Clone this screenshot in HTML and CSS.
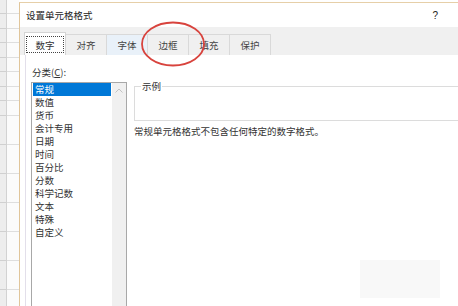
FILE: index.html
```html
<!DOCTYPE html>
<html lang="zh-CN">
<head>
    <meta charset="UTF-8">
    <title>设置单元格格式</title>
    <link rel="stylesheet" href="styles.css">
</head>
<body>

    <div class="sheet">
        <div class="row-head"></div>
        <div class="cells"></div>
    </div>

    <div class="dialog">
        <div class="titlebar">
            <span class="title">设置单元格格式</span>
            <span class="help">?</span>
        </div>

        <div class="tabs">
            <div class="tab active"><span class="focus">数字</span></div>
            <div class="tab">对齐</div>
            <div class="tab hover">字体</div>
            <div class="tab">边框</div>
            <div class="tab">填充</div>
            <div class="tab">保护</div>
        </div>

        <div class="page">
            <div class="category">
                <div class="label">分类(<u>C</u>):</div>
                <div class="listbox">
                    <ul class="items">
                        <li class="selected">常规</li>
                        <li>数值</li>
                        <li>货币</li>
                        <li>会计专用</li>
                        <li>日期</li>
                        <li>时间</li>
                        <li>百分比</li>
                        <li>分数</li>
                        <li>科学记数</li>
                        <li>文本</li>
                        <li>特殊</li>
                        <li>自定义</li>
                    </ul>
                    <div class="scrollbar">
                        <svg class="arrow" width="8" height="5" viewBox="0 0 8 5"><path d="M0.5 4.5 L4 1 L7.5 4.5" fill="none" stroke="#c2c2c2" stroke-width="1"/></svg>
                    </div>
                </div>
            </div>

            <div class="details">
                <fieldset class="sample">
                    <legend>示例</legend>
                </fieldset>
                <p class="desc">常规单元格格式不包含任何特定的数字格式。</p>
            </div>
        </div>
    </div>

    <!-- red marker drawn over the 边框 tab -->
    <svg class="marker" width="70" height="50" viewBox="0 0 70 50">
        <ellipse cx="33" cy="24" rx="31" ry="21.5" fill="none" stroke="#d8433d" stroke-width="1.8"/>
    </svg>
    <div class="smudge"></div>

</body>
</html>
```

FILE: styles.css
```css
* { margin: 0; padding: 0; box-sizing: border-box; }
html, body { width: 458px; height: 306px; overflow: hidden; }
body { position: relative; display: flex; background: #fff; color: #333; font-family: "Noto Sans CJK SC", "Noto Sans", sans-serif; font-size: 9.5px; line-height: 13px; }

/* spreadsheet behind the dialog */
.sheet { width: 19px; flex-shrink: 0; display: flex; }
.row-head { width: 7px; border-right: 1px solid #d2d2d2; background: repeating-linear-gradient(#ededed 0 13.5px, #d0d0d0 13.5px 14.5px); }
.cells { flex: 1; background: repeating-linear-gradient(#fbfbfb 0 13.5px, #dedede 13.5px 14.5px); }

.dialog { flex: 1; margin-top: 2px; border-left: 1px solid #e0c59a; border-top: 1px solid #e6cfa8; display: flex; flex-direction: column; min-width: 0; overflow: hidden; }
.titlebar { flex-shrink: 0; height: 24px; display: flex; align-items: center; justify-content: space-between; padding: 0 20px 0 6px; color: #222; }
.help { font-family: "Liberation Sans", sans-serif; font-size: 10px; }

.tabs { flex-shrink: 0; height: 28px; background: #f0f0f0; display: flex; align-items: flex-end; padding-left: 4px; }
.tab { width: 42px; height: 21px; margin-right: -1px; border: 1px solid #d9d9d9; border-bottom: none; background: #f0f0f0; color: #444; display: flex; align-items: center; justify-content: center; }
.tab.active { height: 23px; background: #fff; border-color: #d4d4d4; position: relative; z-index: 1; color: #333; }
.tab.hover { background: #e9f1f9; }
.focus { border: 1px dotted #444; padding: 1px 8px 0; line-height: 14px; }

.page { flex: 1; min-height: 0; margin-left: 5px; border-left: 1px solid #e3dfea; display: flex; gap: 7px; padding: 11px 0 0 5px; }

.category { width: 96px; flex-shrink: 0; }
.label { padding-left: 1px; }
.listbox { margin-top: 3px; height: 240px; border: 1px solid #a8a8a8; display: flex; }
.items { flex: 1; list-style: none; padding: 0 1px 0 1px; }
.items li { padding-left: 2px; height: 13px; }
.items li.selected { background: #0078d7; color: #fff; }
.scrollbar { width: 14px; background: #f0f0f0; display: flex; justify-content: center; padding-top: 5px; }
.arrow { display: block; }

.details { flex: 1; margin-right: -30px; }
.sample { margin-top: 14px; height: 41px; border: 1px solid #dcdcdc; padding: 0 6px; }
.sample legend { padding: 0 1px; }
.desc { margin-top: 4px; }

.marker { position: absolute; left: 140px; top: 20px; }
.smudge { position: absolute; left: 360px; top: 260px; width: 80px; height: 38px; background: #f8f8f8; }
```
